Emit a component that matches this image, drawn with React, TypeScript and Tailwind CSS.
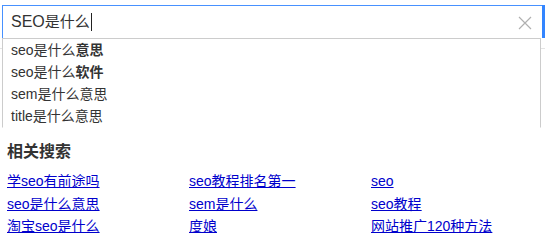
import React from 'react';

const suggestions = [
  { typed: 'seo是什么', rest: '意思', bold: true },
  { typed: 'seo是什么', rest: '软件', bold: true },
  { typed: 'sem是什么意思', rest: '', bold: false },
  { typed: 'title是什么意思', rest: '', bold: false },
];

const related = [
  ['学seo有前途吗', 'seo教程排名第一', 'seo'],
  ['seo是什么意思', 'sem是什么', 'seo教程'],
  ['淘宝seo是什么', '度娘', '网站推广120种方法'],
];

const font = { fontFamily: '"Liberation Sans", "Noto Sans CJK SC", sans-serif' };

export default function App() {
  return (
    <div className="relative w-[545px] h-[240px] bg-white overflow-hidden" style={font}>
      {/* faint line behind the dropdown */}
      <div className="absolute left-0 right-0 top-[48px] h-px bg-[#e4e4e4]" />

      <div className="relative pt-[5px] pl-[2px]">
        <div className="flex">
          <div className="flex items-center w-[540px] h-[33px] border-t border-l border-[#4791ff] bg-white pl-[8px] pr-[10px]">
            <span className="text-[16px] text-[#333] leading-none">
              SEO<span className="text-[15px]">是什么</span>
            </span>
            <span className="inline-block w-px h-[18px] bg-[#222] ml-[1px]" />
            <div className="flex-1" />
            <svg width="14" height="14" viewBox="0 0 14 14" className="mt-[1px]">
              <path d="M1 1 L13 13 M13 1 L1 13" stroke="#b0b0b0" strokeWidth="1.2" fill="none" />
            </svg>
          </div>
          <div className="w-[3px] h-[33px] bg-[#3385ff]" />
        </div>

        <div className="w-[539px] border border-t-[#ccc] border-x-[#ccc] border-b-transparent bg-white">
          {suggestions.map((s, i) => (
            <div key={i} className="h-[22px] flex items-center pl-[8px] text-[14px] text-[#333] leading-none">
              <span>{s.typed}</span>
              {s.rest && <b className="font-bold">{s.rest}</b>}
            </div>
          ))}
        </div>
      </div>

      <div className="pl-[7px] pt-[13px]">
        <div className="text-[16px] font-bold text-[#333] leading-[22px]">相关搜索</div>
        <div className="mt-[7px]">
          {related.map((row, i) => (
            <div key={i} className="grid grid-cols-[182px_182px_1fr] h-[22.5px] items-center">
              {row.map((t) => (
                <a key={t} href="#" className="text-[14px] text-[#0000cc] underline leading-none w-fit">
                  {t}
                </a>
              ))}
            </div>
          ))}
        </div>
      </div>
    </div>
  );
}
